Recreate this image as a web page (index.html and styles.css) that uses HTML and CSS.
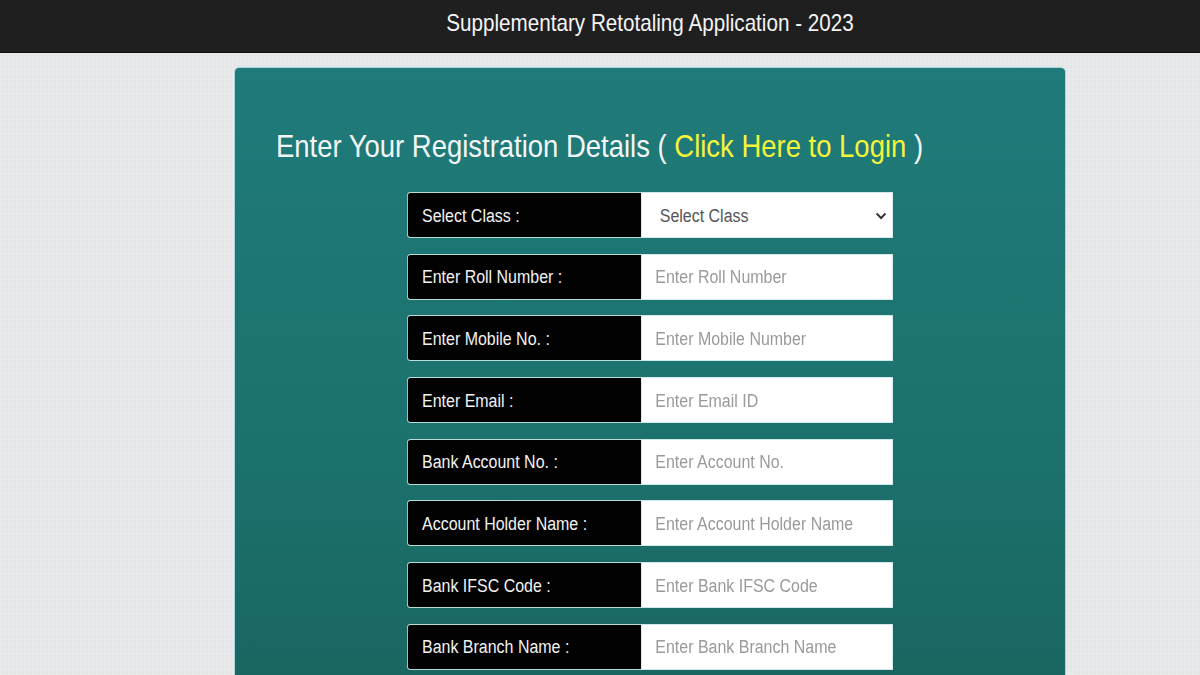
FILE: index.html
```html
<!DOCTYPE html>
<html lang="en">
<head>
<meta charset="utf-8">
<title>Supplementary Retotaling Application - 2023</title>
<link rel="stylesheet" href="styles.css">
</head>
<body>
<header class="topbar">
  <div class="wrap">
    <h1 class="app-title">Supplementary Retotaling Application - 2023</h1>
  </div>
</header>
<main class="wrap">
  <section class="card">
    <h2 class="reg-title">Enter Your Registration Details ( <a class="login-link" href="#">Click Here to Login</a> )</h2>
    <form class="reg-form">
      <div class="row">
        <label class="lbl">Select Class :</label>
        <div class="field select-field">
          <span class="select-text">Select Class</span>
          <svg class="chev" width="13" height="8" viewBox="0 0 13 8"><path d="M1.5 1.5 L6.5 6 L11.5 1.5" fill="none" stroke="#333" stroke-width="2.2"/></svg>
        </div>
      </div>
      <div class="row">
        <label class="lbl">Enter Roll Number :</label>
        <input class="field" type="text" placeholder="Enter Roll Number">
      </div>
      <div class="row">
        <label class="lbl">Enter Mobile No. :</label>
        <input class="field" type="text" placeholder="Enter Mobile Number">
      </div>
      <div class="row">
        <label class="lbl">Enter Email :</label>
        <input class="field" type="text" placeholder="Enter Email ID">
      </div>
      <div class="row">
        <label class="lbl">Bank Account No. :</label>
        <input class="field" type="text" placeholder="Enter Account No.">
      </div>
      <div class="row">
        <label class="lbl">Account Holder Name :</label>
        <input class="field" type="text" placeholder="Enter Account Holder Name">
      </div>
      <div class="row">
        <label class="lbl">Bank IFSC Code :</label>
        <input class="field" type="text" placeholder="Enter Bank IFSC Code">
      </div>
      <div class="row">
        <label class="lbl">Bank Branch Name :</label>
        <input class="field" type="text" placeholder="Enter Bank Branch Name">
      </div>
    </form>
  </section>
</main>
</body>
</html>
```

FILE: styles.css
```css
* { box-sizing: border-box; }
html, body { margin: 0; padding: 0; }
body {
  font-family: "Liberation Sans", Arial, sans-serif;
  background-color: #e6e7e9;
  background-image:
    repeating-linear-gradient(90deg, rgba(255,255,255,0.14) 0 1px, rgba(0,0,0,0) 1px 3px, rgba(0,0,0,0.012) 3px 4px),
    repeating-linear-gradient(0deg, rgba(255,255,255,0.12) 0 1px, rgba(0,0,0,0) 1px 4px, rgba(0,0,0,0.01) 4px 5px);
  height: 675px;
  overflow: hidden;
}
.wrap {
  width: 832px;
  margin-left: 234px;
}
.topbar {
  background: #1f1f20;
  height: 53px;
  border-bottom: 1px solid #0e0e0e;
}
.app-title {
  margin: 0;
  height: 52px;
  display: flex;
  align-items: center;
  justify-content: center;
  color: #f4f4f4;
  font-weight: normal;
  font-size: 24px;
  transform: scaleX(0.86);
  padding-bottom: 7px;
}
.card {
  margin-top: 14px;
  height: 640px;
  background: linear-gradient(180deg, #1f7b7a 0%, #1c716d 60%, #19655f 100%);
  border: 1px solid #a9d6e0;
  border-radius: 5px;
  padding-top: 56px;
}
.reg-title {
  margin: 0 0 0 41px;
  font-weight: normal;
  font-size: 32px;
  color: #f3f6f6;
  white-space: nowrap;
  transform: scaleX(0.858);
  transform-origin: left center;
  line-height: 44px;
}
.login-link {
  color: #f4f53a;
  text-decoration: none;
}
.reg-form {
  margin-top: 24px;
  margin-left: calc((832px - 548px) / 2 - 1px);
  width: 548px;
  display: flex;
  flex-direction: column;
  gap: 15.7px;
  transform: scaleX(0.887);
  transform-origin: center top;
}
.row {
  display: flex;
  height: 46px;
}
.lbl {
  width: 264px;
  background: #020202;
  border: 1px solid #b9dcd8;
  border-right: none;
  border-radius: 4px 0 0 4px;
  color: #f2f2f2;
  font-size: 18px;
  display: flex;
  align-items: center;
  padding-left: 16px;
  padding-top: 2px;
  white-space: nowrap;
}
.lbl, .field { font-family: "Liberation Sans", Arial, sans-serif; }
.field {
  width: 284px;
  height: 46px;
  background: #fff;
  border: 1px solid #cfe9ec;
  border-left: none;
  margin: 0;
  padding: 2px 0 0 16px;
  font-size: 18px;
  color: #555;
  outline: none;
}
.field::placeholder { color: #9a9a9a; }
.select-field {
  display: flex;
  align-items: center;
  justify-content: space-between;
  padding-left: 21px;
  padding-right: 6px;
}
.select-text { color: #555; }
.chev { display: block; }
```
